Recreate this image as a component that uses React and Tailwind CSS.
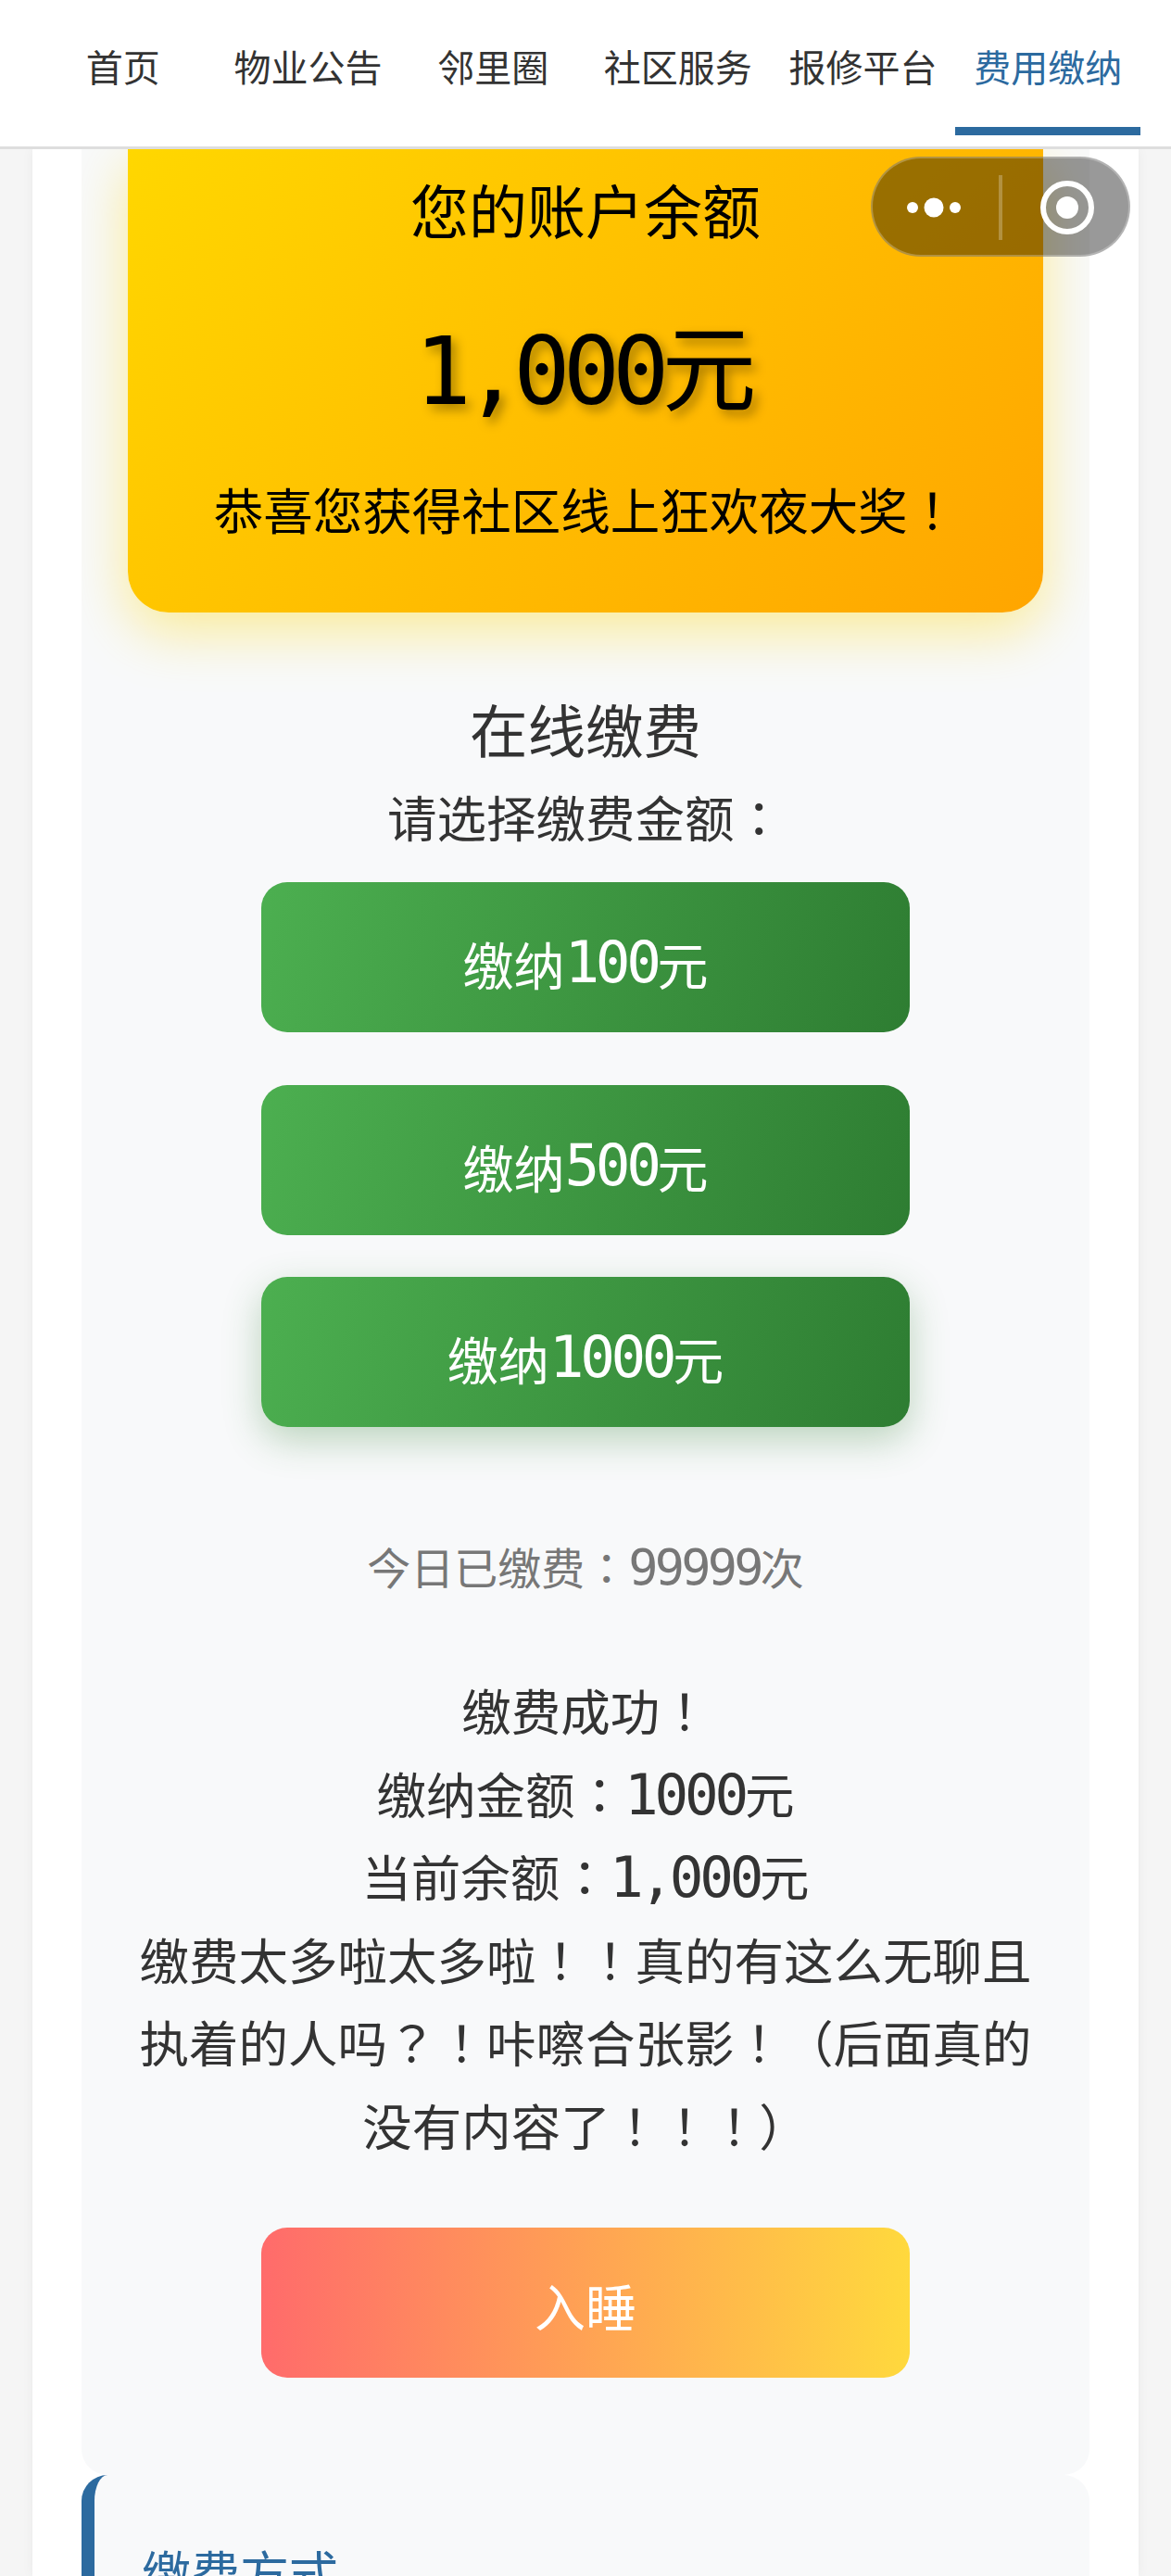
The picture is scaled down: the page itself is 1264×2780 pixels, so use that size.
const tabs = ["首页", "物业公告", "邻里圈", "社区服务", "报修平台", "费用缴纳"];

function N({ children }) {
  return <span className="font-['DejaVu_Sans_Mono',monospace] text-[1.14em] leading-none tracking-[-0.07em]">{children}</span>;
}
function P({ children }) {
  return <span className="font-['Noto_Sans_CJK_TC',sans-serif]">{children}</span>;
}

function PayButton({ children, className }) {
  return (
    <div className={"mx-auto flex h-[162px] w-[700px] items-center justify-center rounded-[28px] text-[55px] leading-[70px] text-white " + className}>
      {children}
    </div>
  );
}

function Capsule() {
  return (
    <div className="absolute left-[940px] top-[169px] z-20 flex h-[108px] w-[280px] items-center rounded-full border-2 border-white/25 bg-black/40">
      <svg width="280" height="108" viewBox="0 0 280 108" className="shrink-0 -m-[2px]">
        <circle cx="45" cy="55" r="6" fill="#fff" />
        <circle cx="68" cy="55" r="10.5" fill="#fff" />
        <circle cx="91" cy="55" r="6" fill="#fff" />
        <rect x="138" y="20" width="4" height="70" fill="#fff" fillOpacity="0.25" />
        <circle cx="212" cy="55" r="26" fill="none" stroke="#fff" strokeWidth="6" />
        <circle cx="212" cy="55" r="12" fill="#fff" />
      </svg>
    </div>
  );
}

export default function App() {
  return (
    <div className="relative h-[2780px] w-[1264px] overflow-hidden bg-[#f5f5f5] font-['Noto_Sans_CJK_SC',sans-serif] text-[#333]">
      <header className="relative z-10 h-[161px] border-b-[3px] border-[#dedede] bg-white px-[33px]">
        <nav className="grid h-[146px] grid-cols-6">
          {tabs.map((t, i) => (
            <div
              key={t}
              className={
                "flex items-start justify-center border-b-[9px] pt-[45px] text-[40px] leading-[52px] " +
                (i === 5 ? "border-[#2c6a9f] text-[#2c6a9f]" : "border-transparent")
              }
            >
              {t}
            </div>
          ))}
        </nav>
      </header>

      <Capsule />

      <main className="mx-[35px] h-[2619px] overflow-hidden bg-white px-[53px] shadow-[0_0_12px_rgba(0,0,0,0.05)]">
        <section className="overflow-hidden rounded-b-[28px] bg-[#f8f9fa] px-[50px] pb-[105px] text-center">
          <div className="rounded-b-[44px] bg-[linear-gradient(135deg,#ffd700,#ffa500)] pb-[77px] pt-[24px] text-black shadow-[0_20px_60px_rgba(255,215,0,0.4)]">
            <div className="text-[63px] leading-[80px]">您的账户余额</div>
            <div className="mt-[67px] text-[102px] leading-[120px] [text-shadow:5px_6px_12px_rgba(0,0,0,0.35)]">
              <span className="font-['DejaVu_Sans_Mono',monospace] leading-none tracking-[-8px]">1,000</span>元
            </div>
            <div className="mt-[62px] text-[53.5px] leading-[70px]">恭喜您获得社区线上狂欢夜大奖<P>！</P></div>
          </div>

          <h2 className="mt-[85px] text-[62.5px] font-normal leading-[80px]">在线缴费</h2>
          <p className="mt-[20px] text-[53.5px] leading-[70px]">请选择缴费金额<P>：</P></p>

          <PayButton className="mt-[36px] bg-[linear-gradient(105deg,#4caf50,#2e7d32)] pt-[12px]">缴纳<N>100</N>元</PayButton>
          <PayButton className="mt-[57px] bg-[linear-gradient(105deg,#4caf50,#2e7d32)] pt-[12px]">缴纳<N>500</N>元</PayButton>
          <PayButton className="mt-[45px] bg-[linear-gradient(105deg,#4caf50,#2e7d32)] pt-[12px] shadow-[0_14px_40px_rgba(46,125,50,0.3)]">缴纳<N>1000</N>元</PayButton>

          <p className="mt-[120px] text-[47px] leading-[60px] text-[#777]">今日已缴费<P>：</P><N>99999</N>次</p>

          <div className="mt-[80px] text-[53.5px] leading-[89.6px]">
            <p>缴费成功<P>！</P></p>
            <p>缴纳金额<P>：</P><N>1000</N>元</p>
            <p>当前余额<P>：</P><N>1,000</N>元</p>
            <p>缴费太多啦太多啦<P>！！</P>真的有这么无聊且执着的人吗<P>？！</P>咔嚓合张影<P>！</P>（后面真的没有内容了<P>！！！</P>）</p>
          </div>

          <PayButton className="mt-[66px] bg-[linear-gradient(90deg,#ff6b6b,#ffd93d)] pt-[4px]">入睡</PayButton>
        </section>

        <section className="rounded-[28px] border-l-[14px] border-[#2c6a9f] bg-[#f8f9fa] px-[51px] pt-[69px] pb-[60px]">
          <h3 className="text-[53px] font-normal leading-[70px] text-[#2c6a9f]">缴费方式</h3>
        </section>
      </main>
    </div>
  );
}
